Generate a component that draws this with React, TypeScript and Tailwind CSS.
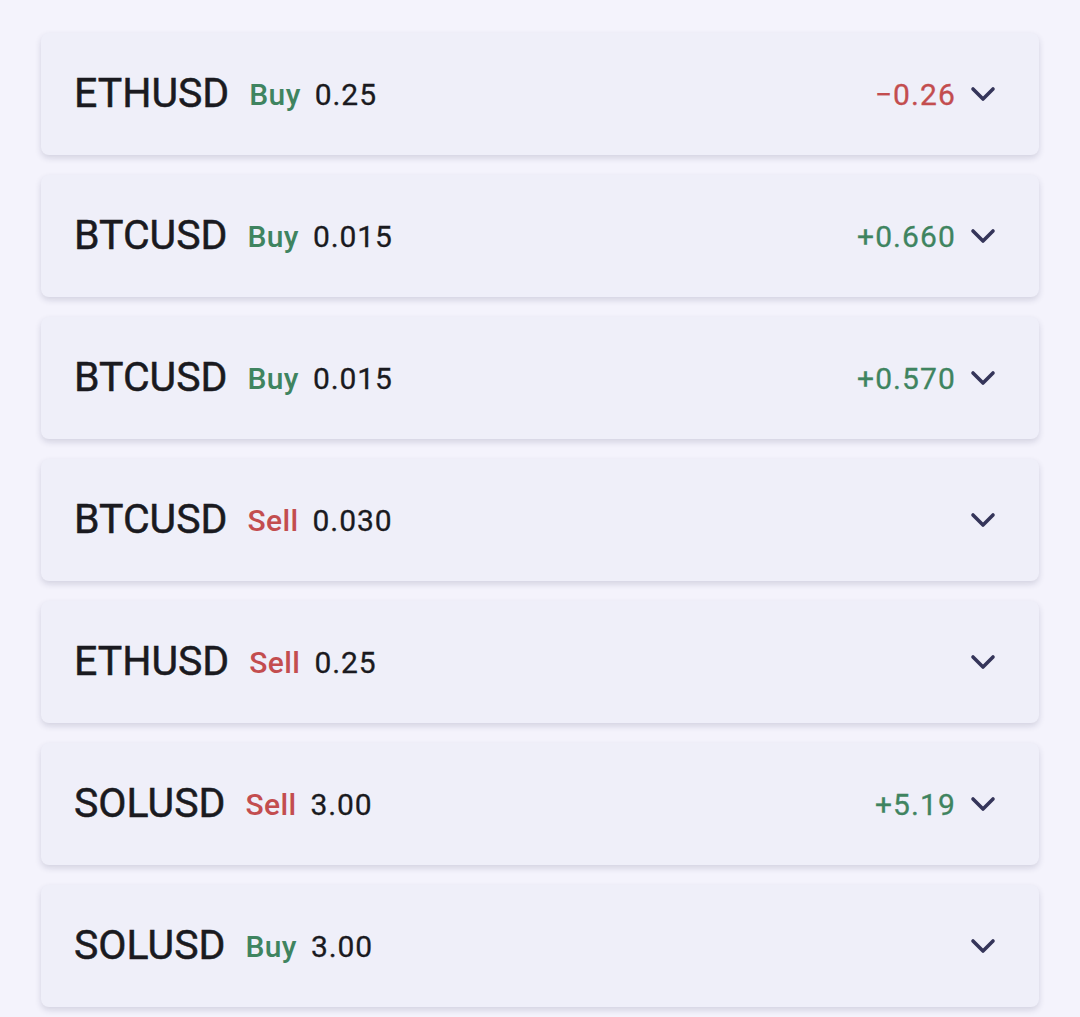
import { useState } from 'react';

interface IPosition {
    id: number;
    symbol: string;
    side: 'Buy' | 'Sell';
    volume: string;
    pnl?: string;
}

const positions: IPosition[] = [
    { id: 1, symbol: 'ETHUSD', side: 'Buy', volume: '0.25', pnl: '−0.26' },
    { id: 2, symbol: 'BTCUSD', side: 'Buy', volume: '0.015', pnl: '+0.660' },
    { id: 3, symbol: 'BTCUSD', side: 'Buy', volume: '0.015', pnl: '+0.570' },
    { id: 4, symbol: 'BTCUSD', side: 'Sell', volume: '0.030' },
    { id: 5, symbol: 'ETHUSD', side: 'Sell', volume: '0.25' },
    { id: 6, symbol: 'SOLUSD', side: 'Sell', volume: '3.00', pnl: '+5.19' },
    { id: 7, symbol: 'SOLUSD', side: 'Buy', volume: '3.00' },
];

const Chevron = () => (
    <svg width="26" height="16" viewBox="0 0 26 16" fill="none" className="shrink-0">
        <path
            d="M3 3 L13 13 L23 3"
            stroke="#35355a"
            strokeWidth="3.6"
            strokeLinecap="round"
            strokeLinejoin="round"
        />
    </svg>
);

const PositionsList = () => {
    const [open, setOpen] = useState<number | null>(null);

    return (
        <div className="bg-[#f4f3fc] min-h-screen font-['Roboto',sans-serif]">
            <div className="flex flex-col gap-5 px-[41px] pt-[33px] pb-6">
                {positions.map((p) => (
                    <div
                        key={p.id}
                        onClick={() => setOpen(open === p.id ? null : p.id)}
                        className="h-[122px] bg-[#efeff9] rounded-lg shadow-[0_3px_6px_rgba(40,40,80,0.16)]
                                   flex items-center pl-[33px] pr-[43px] cursor-pointer"
                    >
                        <span className="text-[41px] text-[#1a1a20] [-webkit-text-stroke:0.5px_#1a1a20]">
                            {p.symbol}
                        </span>
                        <span
                            className={`ml-[20px] text-[30px] font-medium tracking-[0.4px] ${p.side === 'Buy' ? 'text-[#3f8460]' : 'text-[#c34d4f]'
                                }`}
                        >
                            {p.side}
                        </span>
                        <span className="ml-[14px] text-[30px] text-[#1a1a20] tracking-[0.9px] [-webkit-text-stroke:0.3px_#1a1a20]">
                            {p.volume}
                        </span>
                        <div className="ml-auto flex items-center gap-[14px]">
                            {p.pnl && (
                                <span
                                    className={`text-[30px] tracking-[1.1px] ${p.pnl.startsWith('+')
                                        ? 'text-[#3f8460] [-webkit-text-stroke:0.3px_#3f8460]'
                                        : 'text-[#c34d4f] [-webkit-text-stroke:0.3px_#c34d4f]'
                                        }`}
                                >
                                    {p.pnl}
                                </span>
                            )}
                            <Chevron />
                        </div>
                    </div>
                ))}
            </div>
        </div>
    );
};

export default PositionsList;
